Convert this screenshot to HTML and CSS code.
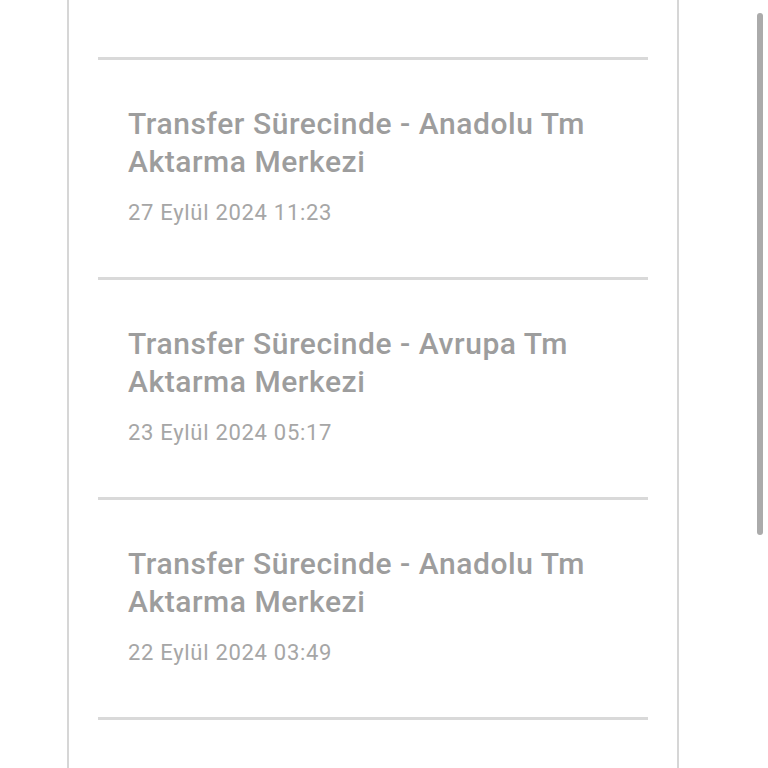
FILE: index.html
```html
<!DOCTYPE html>
<html lang="tr">
<head>
<meta charset="utf-8">
<link rel="stylesheet" href="styles.css">
</head>
<body>
<div class="card">
  <div class="item">
    <div class="title">Transfer Sürecinde - Anadolu Tm Aktarma Merkezi</div>
    <div class="date">27 Eylül 2024 11:23</div>
  </div>
  <div class="item">
    <div class="title">Transfer Sürecinde - Avrupa Tm Aktarma Merkezi</div>
    <div class="date">23 Eylül 2024 05:17</div>
  </div>
  <div class="item">
    <div class="title">Transfer Sürecinde - Anadolu Tm Aktarma Merkezi</div>
    <div class="date">22 Eylül 2024 03:49</div>
  </div>
  <div class="item last"></div>
</div>
<div class="scrollbar"></div>
</body>
</html>
```
FILE: styles.css
```css
html, body {
  margin: 0;
  padding: 0;
  background: #ffffff;
  height: 768px;
  overflow: hidden;
}
body {
  font-family: Roboto, "Liberation Sans", sans-serif;
}
.card {
  box-sizing: border-box;
  margin-left: 67px;
  width: 612px;
  min-height: 768px;
  border-left: 2px solid #d6d6d6;
  border-right: 2px solid #d6d6d6;
  padding: 57px 29px 0 29px;
}
.item {
  border-top: 3px solid #d9d9d9;
  padding: 45px 30px 50px 30px;
}
.item.last {
  padding: 0;
}
.title {
  font-size: 30px;
  line-height: 38px;
  font-weight: 500;
  letter-spacing: 0.55px;
  color: #9d9d9d;
  width: 470px;
}
.date {
  margin-top: 18px;
  font-size: 22px;
  line-height: 28px;
  letter-spacing: 0.7px;
  color: #a6a6a6;
}
.scrollbar {
  position: fixed;
  left: 757px;
  top: 13px;
  width: 6px;
  height: 522px;
  border-radius: 3px;
  background: #ababab;
}
```
